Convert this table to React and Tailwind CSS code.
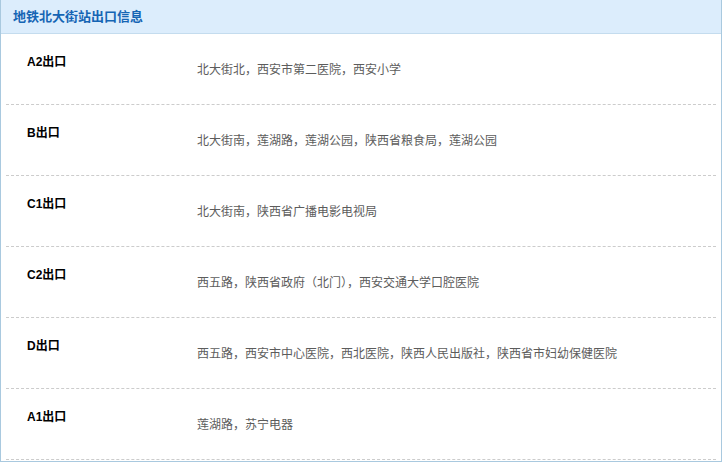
export default function App() {
  const rows = [
    ["A2出口", "北大街北，西安市第二医院，西安小学"],
    ["B出口", "北大街南，莲湖路，莲湖公园，陕西省粮食局，莲湖公园"],
    ["C1出口", "北大街南，陕西省广播电影电视局"],
    ["C2出口", "西五路，陕西省政府（北门），西安交通大学口腔医院"],
    ["D出口", "西五路，西安市中心医院，西北医院，陕西人民出版社，陕西省市妇幼保健医院"],
    ["A1出口", "莲湖路，苏宁电器"],
  ];
  return (
    <div className="w-[724px] h-[462px] bg-white" style={{ fontFamily: '"Liberation Sans", "Noto Sans CJK SC", sans-serif' }}>
      <div className="w-[722px] h-[462px] border border-[#a9c9df] border-t-0">
        <div className="h-[34px] bg-[#dcedfc] border-b border-[#c4dcee] flex items-center pl-[12px]">
          <span className="text-[13px] font-bold text-[#1565b4]">地铁北大街站出口信息</span>
        </div>
        <div className="px-[5px]">
          {rows.map(([a, b], i) => (
            <div key={i} className="h-[71px] border-b border-dashed border-[#cccccc] flex">
              <div className="w-[191px] pl-[21px] pt-[21px] text-[12px] font-bold text-black leading-[14px]">{a}</div>
              <div className="flex items-center text-[12px] text-[#5c5c5c] pt-[2px]">{b}</div>
            </div>
          ))}
        </div>
      </div>
    </div>
  );
}
